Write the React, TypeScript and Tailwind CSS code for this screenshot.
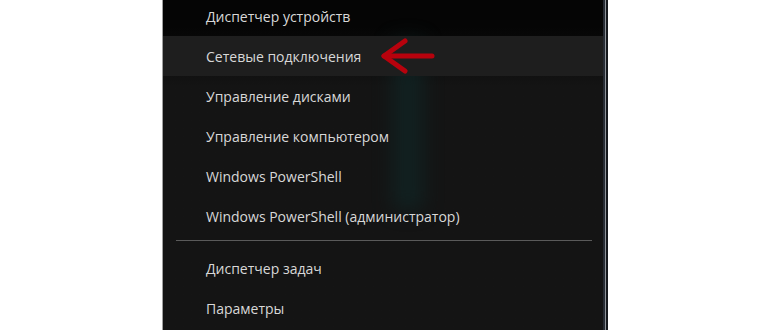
import React from 'react';

const topItems = [
  'Диспетчер устройств',
  'Сетевые подключения',
  'Управление дисками',
  'Управление компьютером',
  'Windows PowerShell',
  'Windows PowerShell (администратор)',
];

const bottomItems = ['Диспетчер задач', 'Параметры'];

const Row: React.FC<{ label: string; active?: boolean; children?: React.ReactNode }> = ({ label, active, children }) => (
  <div className={`h-10 flex items-center pl-[43px] ${active ? 'bg-[#1e1e1e]' : ''}`}>
    <span className="text-[14px] text-[#d8d8d8]">{label}</span>
    {children}
  </div>
);

const Arrow = () => (
  <svg width="56" height="36" viewBox="0 0 56 36" className="ml-[19px]">
    <g stroke="#c4000c" strokeWidth="5" strokeLinecap="round" strokeLinejoin="round" fill="none" opacity="0.92">
      <path d="M4 18 H52" />
      <path d="M25 3 L4 18 L25 33" />
    </g>
  </svg>
);

const App: React.FC = () => {
  return (
    <div className="w-[770px] h-[330px] bg-white overflow-hidden flex" style={{ fontFamily: '"Open Sans", "Noto Sans", sans-serif' }}>
      <div className="ml-[162px] flex h-full">
        <div className="w-px bg-[#a0a0a0]" />
        <div className="relative w-[440px] h-full bg-linear-to-b from-[#050505] from-[8%] to-[#141414] to-[26%] flex flex-col">
          {/* faint teal glow behind the menu */}
          <div className="pointer-events-none absolute left-[230px] top-[40px] w-[30px] h-[170px] bg-[#0f2a2a] opacity-60 blur-[10px]" />
          <div className="relative -mt-1">
            {topItems.map((t, i) => (
              <Row key={t} label={t} active={i === 1}>
                {i === 1 && <Arrow />}
              </Row>
            ))}
            <div className="h-3 flex items-start pt-1 pl-[13px] pr-[11px]">
              <div className="h-px w-full bg-[#5a5a5a]" />
            </div>
            {bottomItems.map((t) => (
              <Row key={t} label={t} />
            ))}
          </div>
        </div>
        <div className="w-[2px] bg-[#262b33]" />
        <div className="w-px bg-[#8d9298]" />
        <div className="w-[2px] bg-[#15181c]" />
      </div>
    </div>
  );
};

export default App;
